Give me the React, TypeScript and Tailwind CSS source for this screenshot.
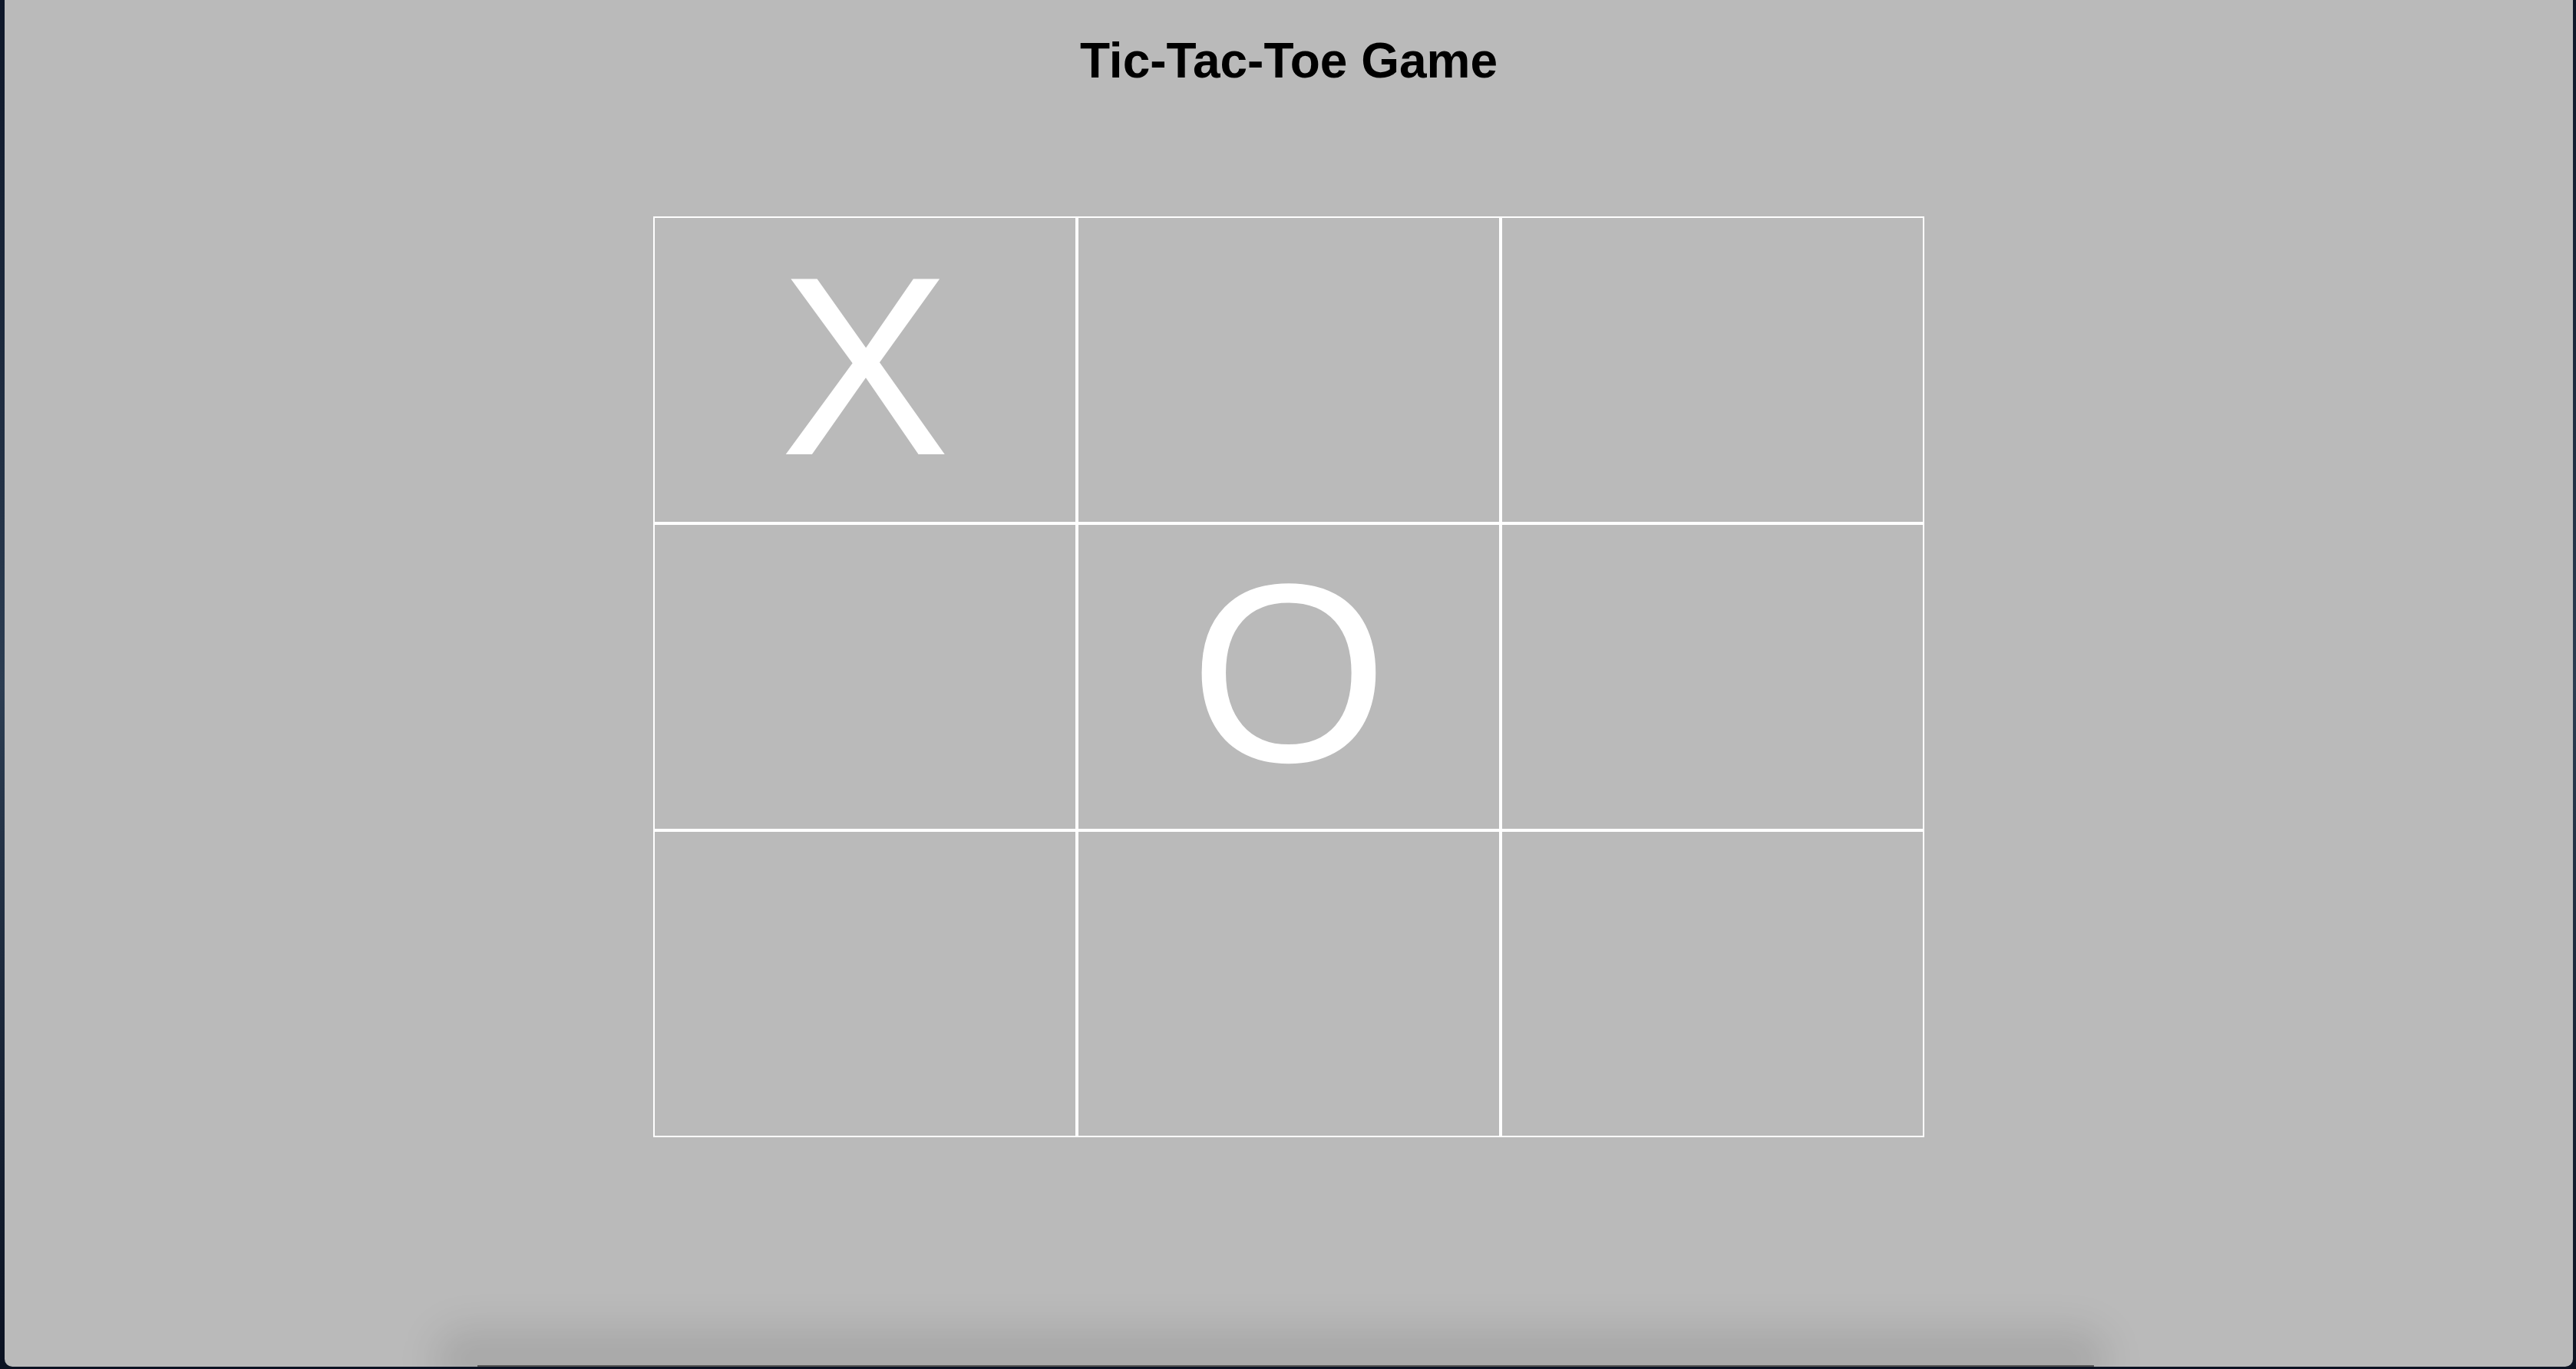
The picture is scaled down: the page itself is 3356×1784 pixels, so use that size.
const board: string[] = ["X", "", "", "", "O", "", "", "", ""];

const Cell = ({ value }: { value: string }) => {
    return (
        <div className="w-[552px] h-[400px] border-2 border-white flex items-center justify-center pb-[10px]">
            <span className="text-white text-[332px] font-normal">{value}</span>
        </div>
    );
};

export default function App() {
    return (
        <div className="w-[3356px] h-[1784px] overflow-hidden flex bg-gradient-to-b from-[#0e1729] via-[#2c3d52] to-[#0b1222]">
            <div
                className="relative overflow-hidden ml-[6px] w-[3346px] h-[1781px] bg-[#bababa] rounded-b-[10px] flex flex-col items-center"
                style={{ fontFamily: '"Liberation Sans", Arial, sans-serif' }}
            >
                <h1 className="mt-[42px] text-[64px] leading-[74px] font-bold text-black">
                    Tic-Tac-Toe Game
                </h1>
                <div className="mt-[166px] grid grid-cols-3">
                    {board.map((value, i) => (
                        <Cell key={i} value={value} />
                    ))}
                </div>
                <div className="absolute left-[560px] w-[2180px] bottom-[-30px] h-[80px] bg-[#00000018] rounded-[40px] blur-[24px]" />
                <div className="absolute left-[616px] w-[2106px] bottom-0 h-[2px] bg-[#555555]" />
            </div>
        </div>
    );
}
